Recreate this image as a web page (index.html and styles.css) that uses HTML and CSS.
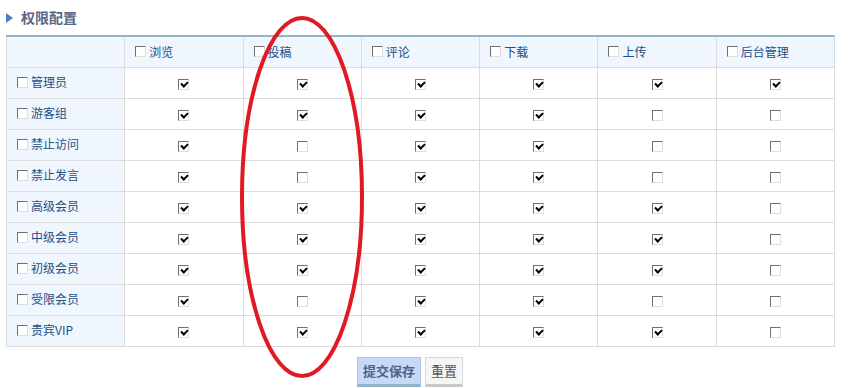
FILE: index.html
```html
<!DOCTYPE html>
<html lang="zh-CN">
<head>
  <meta charset="UTF-8" />
  <title>权限配置</title>
  <link rel="stylesheet" href="styles.css">
</head>
<body>
  <div class="page">
    <h3 class="title"><span class="arrow"></span>权限配置</h3>

    <table class="perm" id="perm">
      <thead>
        <tr id="head-row">
          <th></th>
        </tr>
      </thead>
      <tbody id="perm-body"></tbody>
    </table>

    <div class="button-group">
      <button class="btn btn-primary">提交保存</button>
      <button class="btn">重置</button>
    </div>

    <!-- 标注圈 -->
    <svg class="mark" width="132" height="370" viewBox="0 0 132 370">
      <ellipse cx="66" cy="185" rx="60" ry="179" fill="none" stroke="#e11922" stroke-width="4"/>
    </svg>
  </div>

  <script>
    const actions = ['浏览', '投稿', '评论', '下载', '上传', '后台管理'];

    // 1 = 已勾选
    const groups = [
      ['管理员',   [1, 1, 1, 1, 1, 1]],
      ['游客组',   [1, 1, 1, 1, 0, 0]],
      ['禁止访问', [1, 0, 1, 1, 0, 0]],
      ['禁止发言', [1, 0, 1, 1, 0, 0]],
      ['高级会员', [1, 1, 1, 1, 1, 0]],
      ['中级会员', [1, 1, 1, 1, 1, 0]],
      ['初级会员', [1, 1, 1, 1, 1, 0]],
      ['受限会员', [1, 0, 1, 1, 0, 0]],
      ['贵宾VIP',  [1, 1, 1, 1, 1, 0]]
    ];

    const headRow = document.getElementById('head-row');
    actions.forEach(name => {
      const th = document.createElement('th');
      th.innerHTML = `<label><input type="checkbox" class="cb">${name}</label>`;
      headRow.appendChild(th);
    });

    const body = document.getElementById('perm-body');
    groups.forEach(([name, flags]) => {
      const tr = document.createElement('tr');
      let html = `<td class="group"><label><input type="checkbox" class="cb">${name}</label></td>`;
      flags.forEach(on => {
        html += `<td class="cell"><input type="checkbox" class="cb"${on ? ' checked' : ''}></td>`;
      });
      tr.innerHTML = html;
      body.appendChild(tr);
    });
  </script>
</body>
</html>
```

FILE: styles.css
```css
* { box-sizing: border-box; }
body {
  margin: 0;
  font-family: "Noto Sans CJK SC", "Liberation Sans", sans-serif;
  font-size: 12px;
  color: #1e4f85;
  background: #fff;
}
.page {
  position: relative;
  padding: 6px 0 0 6px;
}
.title {
  margin: 0 0 6px;
  height: 23px;
  line-height: 23px;
  font-size: 14px;
  font-weight: bold;
  color: #5a6684;
  display: flex;
  align-items: center;
  gap: 8px;
}
.arrow {
  width: 0;
  height: 0;
  border-top: 5px solid transparent;
  border-bottom: 5px solid transparent;
  border-left: 7px solid #4d7fc4;
}
.perm {
  width: 829px;
  border-collapse: collapse;
  table-layout: fixed;
  border-top: 2px solid #93b5c6;
}
.perm th, .perm td {
  height: 31px;
  padding: 0;
  border: 1px solid #dcdcdc;
  border-top: none;
  font-weight: normal;
  line-height: 16px;
}
.perm th {
  background: #f0f6fd;
  text-align: left;
  padding-left: 10px;
  height: 31px;
}
.perm th:first-child { border-left-color: #cfdfe9; }
.perm th:last-child { border-right-color: #cfdfe9; }
.perm td.group {
  background: #f0f6fd;
  padding-left: 10px;
}
.perm td.cell { text-align: center; }
label {
  display: inline-flex;
  align-items: center;
  gap: 3px;
  white-space: nowrap;
}
.cb {
  appearance: none;
  -webkit-appearance: none;
  margin: 0;
  width: 11px;
  height: 11px;
  border: 1px solid;
  border-color: #6f6f6f #dedede #dedede #6f6f6f;
  background: #fff;
  position: relative;
  vertical-align: middle;
}
.cb:checked::after {
  content: "";
  position: absolute;
  left: 2px;
  top: 1px;
  width: 5px;
  height: 3px;
  border-left: 2px solid #000;
  border-bottom: 2px solid #000;
  transform: rotate(-45deg);
}
.button-group {
  display: flex;
  gap: 4px;
  padding: 10px 0 0 351px;
}
.btn {
  height: 30px;
  padding: 0 5px;
  font-family: inherit;
  font-size: 13px;
  color: #555;
  background: #f6f6f6;
  border: 1px solid #dadada;
  border-bottom: 3px solid #c8c8c8;
  cursor: pointer;
}
.btn-primary {
  font-weight: bold;
  color: #52618a;
  background: #c4daf6;
  border-color: #a9c5e6;
  border-bottom-color: #8db3cd;
}
.mark {
  position: absolute;
  left: 236px;
  top: 12px;
}
```
